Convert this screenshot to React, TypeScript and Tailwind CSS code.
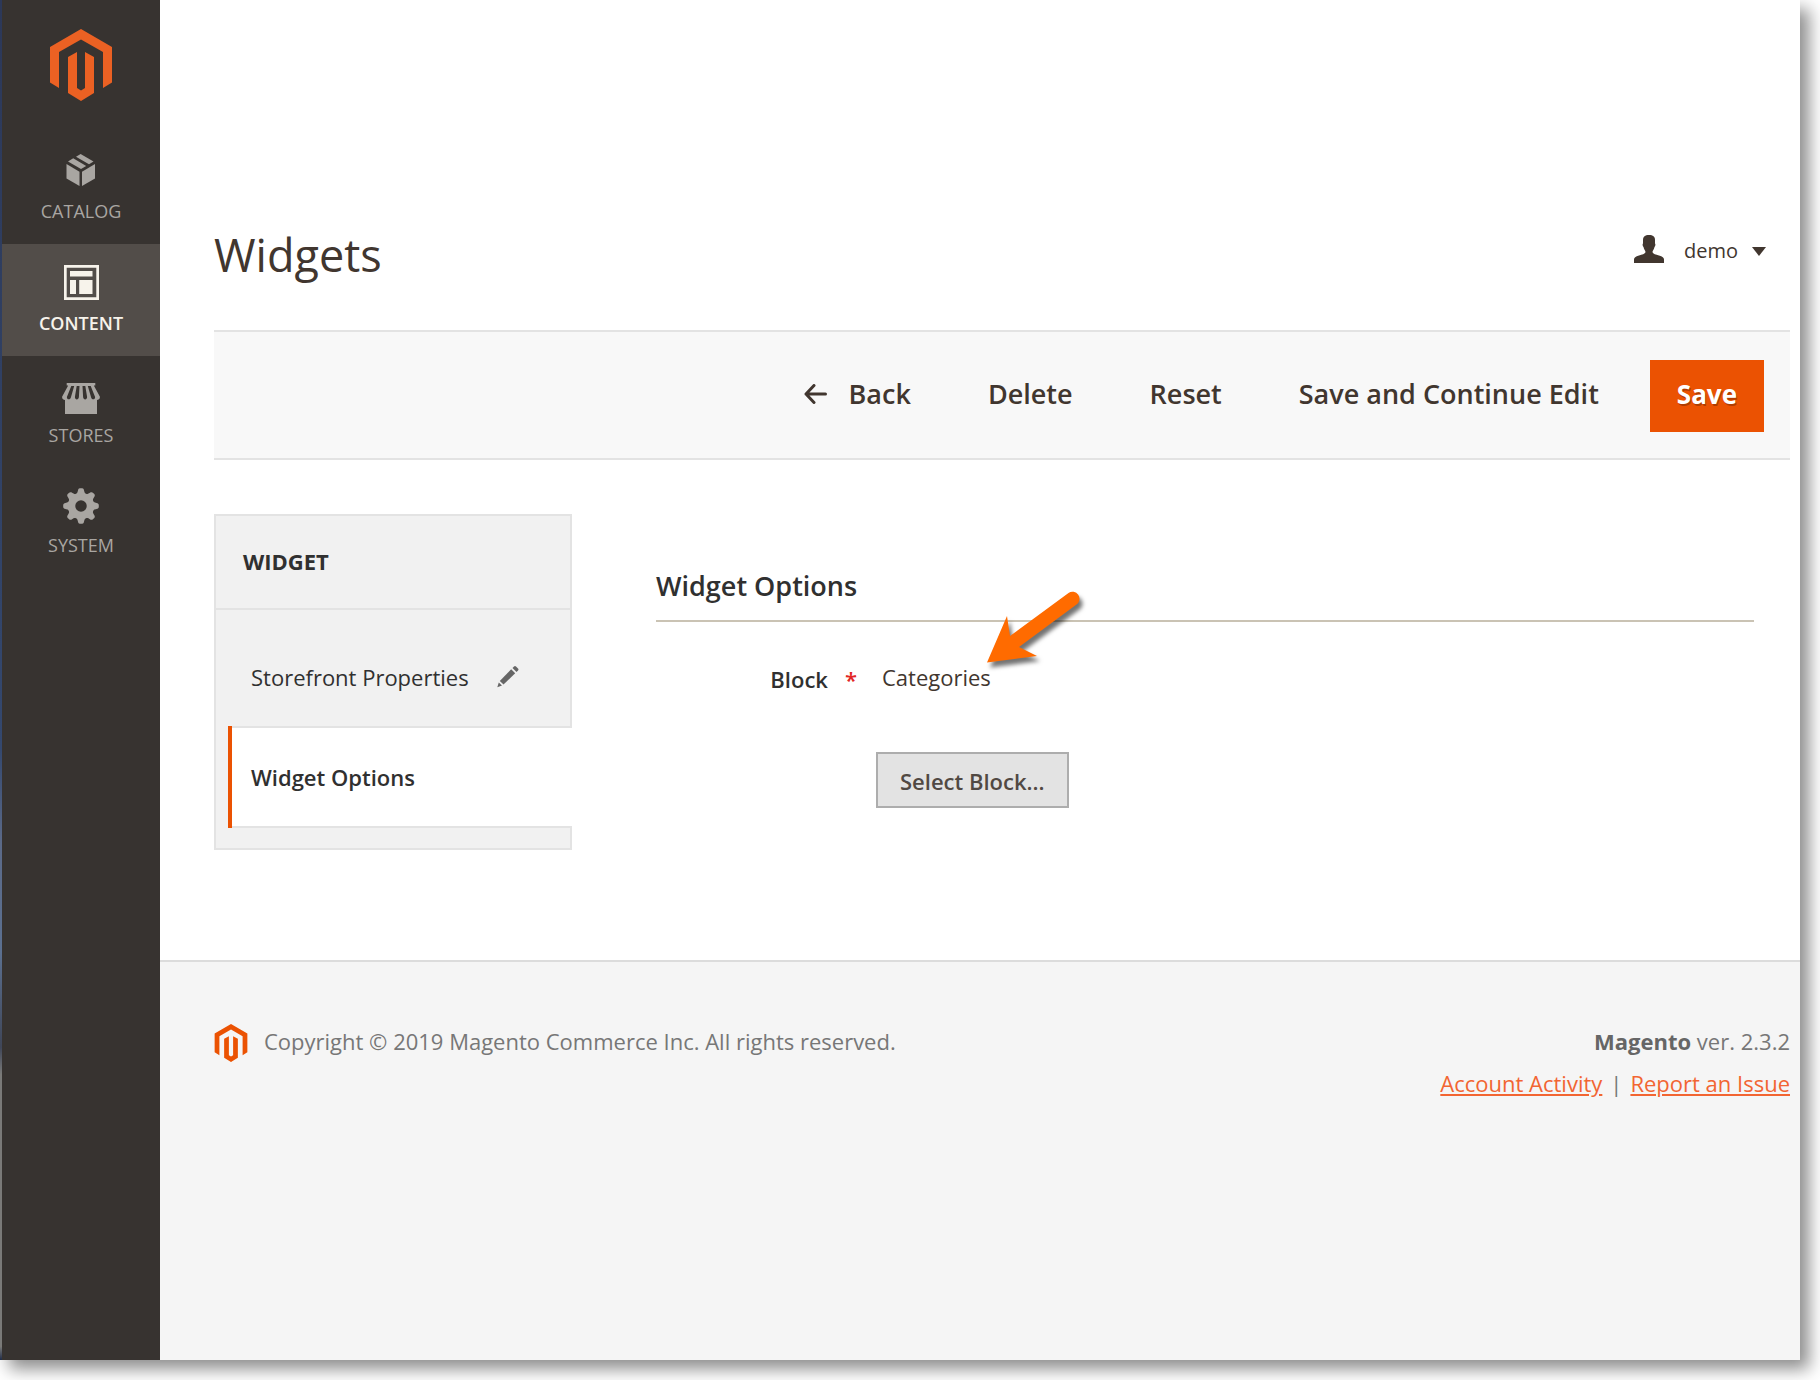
import type { ReactNode } from 'react';

function MagentoLogo({ className }: { className: string }) {
  return (
    <svg viewBox="0 0 62 72" className={className} fill="currentColor" aria-hidden="true">
      <path d="M31 0L62 18V53.500L53 59V23L31 10.500L9 23V59L0 53.500V18Z" />
      <path d="M18 28L27 23V59L31 61.500L35 59V23L44 28V64L31 72L18 64Z" />
    </svg>
  );
}

function CatalogIcon() {
  return (
    <svg width="30" height="32" viewBox="0 0 30 32" fill="currentColor" aria-hidden="true">
      <path d="M0.500 10L13.500 17.700V32L0.500 24.500Z" />
      <path d="M16 17.700L29 10V24.500L16 32Z" />
      <path d="M14.600 0L27.500 7.500L23 10.200L10 2.700Z" />
      <path d="M7.200 4.300L20.200 12L15 15L2 7.400Z" />
    </svg>
  );
}

function ContentIcon() {
  return (
    <svg width="35" height="35" viewBox="0 0 35 35" fill="currentColor" aria-hidden="true">
      <path fillRule="evenodd" d="M0 0H35V35H0ZM2.700 2.700V32.300H32.300V2.700Z" />
      <path d="M6 6H28.500V11.500H6ZM6 15H12V29H6ZM15.200 15H28.500V29H15.200Z" />
    </svg>
  );
}

function StoresIcon() {
  return (
    <svg width="38" height="40" viewBox="0 -9 38 40" fill="currentColor" aria-hidden="true">
      <path d="M4.700 0H33.300V2.500H31.800L37.800 13.500C38.300 15.500 36.500 17 35 17V31H3V17C1.500 17 -0.300 15.500 0.200 13.500L6.200 2.500H4.700Z" />
      <path
        className="fill-[#373330]"
        d="M9.300 3H12.200L9 14C8.500 17.200 4.700 17 4.900 14ZM14.700 3H17.500L16.900 14C16.700 17.300 12.900 17.300 12.900 14ZM20.500 3H23.300L25.100 14C25.100 17.300 21.300 17.300 21.100 14ZM25.800 3H28.700L33.100 14C33.300 17 29.500 17.200 29 14Z"
      />
    </svg>
  );
}

const toothAngles = [0, 45, 90, 135, 180, 225, 270, 315];

function SystemIcon() {
  return (
    <svg width="36" height="40" viewBox="-18 -22 36 40" fill="currentColor" aria-hidden="true">
      <circle r="9.500" fill="none" stroke="currentColor" strokeWidth="7.500" />
      {toothAngles.map((angle) => (
        <path
          key={angle}
          transform={`rotate(${angle})`}
          d="M-5.500 -11.500C-3.500 -12.500 -3.500 -14 -2.800 -16.500Q-2.300 -17.800 -1 -17.800H1Q2.300 -17.800 2.800 -16.500C3.500 -14 3.500 -12.500 5.500 -11.500Z"
        />
      ))}
    </svg>
  );
}

function UserIcon() {
  return (
    <svg width="30" height="28" viewBox="0 0 30 28" fill="currentColor" className="mb-1" aria-hidden="true">
      <path d="M15 0C19 0 21 1.800 21 5V8.500C21.800 9 21.300 11.500 20.500 12C20 14.500 18.500 15.500 18.500 17C19 19 22 19.500 25 20.500C28.500 21.500 30 22.500 30 24.500V28H0V24.500C0 22.500 1.500 21.500 5 20.500C8 19.500 11 19 11.500 17C11.500 15.500 10 14.500 9.500 12C8.700 11.500 8.200 9 9 8.500V5C9 1.800 11 0 15 0Z" />
    </svg>
  );
}

function PencilIcon() {
  return (
    <svg width="22" height="22" viewBox="0 0 22 22" fill="currentColor" aria-hidden="true">
      <path d="M17 0.500Q18 -0.500 19 0.500L21 2.500Q22 3.500 21 4.500L19.500 6L15.500 2Z" />
      <path d="M14.200 3.300L18.200 7.300L6.500 18.500L2.800 15Z" />
      <path d="M1.800 16.500L5 19.500L0.300 21.300Z" />
    </svg>
  );
}

// Callout arrow that points at the selected block name
function PointerArrow() {
  return (
    <svg
      width="110"
      height="90"
      viewBox="0 0 110 90"
      className="absolute left-full -top-[77px] -ml-[14px] pointer-events-none overflow-visible drop-shadow-[3px_5px_2px_rgba(0,0,0,0.55)]"
      aria-hidden="true"
    >
      <path
        className="fill-[#ff6b00]"
        d="M10 77.500L30 31L33 51L91.500 8A7 7 0 0 1 99.500 19.500L42 62L60 71Z"
      />
    </svg>
  );
}

function NavItem({ icon, label, active = false }: { icon: ReactNode; label: string; active?: boolean }) {
  const stateClass = active ? 'h-28 bg-[#524d49] font-semibold text-[#f7f3eb]' : 'h-[110px] text-[#a9a6a2]';

  return (
    <li className="first:pb-0.5">
      <a href="#" className={`flex flex-col items-center pt-5 text-[18px] leading-6 ${stateClass}`}>
        <span className="flex h-9 items-center">{icon}</span>
        <span className="mt-[11px]">{label}</span>
      </a>
    </li>
  );
}

function ToolbarButton({ children }: { children: ReactNode }) {
  return (
    <button type="button" className="flex h-[72px] items-center gap-[22px] px-[26px] pb-1 font-semibold">
      {children}
    </button>
  );
}

export default function App() {
  return (
    <div className="flex min-h-screen bg-white pr-5 pb-5 font-['Open_Sans','Noto_Sans',sans-serif] text-[22px] text-[#303030]">
      <div className="flex flex-1 shadow-[9px_9px_16px_rgba(0,0,0,0.45)]">
        <div className="w-0.5 shrink-0 bg-[linear-gradient(#2c3858_0%,#34486e_55%,#5b6a88_62%,#5b7090_70%,#3f4658_77%,#7a7a78_79%,#7a7a78_99%,#202c48_100%)]" />
        <nav className="w-[158px] shrink-0 bg-[#373330]">
          <a href="#" aria-label="Magento Admin" className="flex justify-center pt-[29px] text-[#eb6123]">
            <MagentoLogo className="h-[72px] w-[62px]" />
          </a>
          <ul className="mt-[31px]">
            <NavItem icon={<CatalogIcon />} label="CATALOG" />
            <NavItem icon={<ContentIcon />} label="CONTENT" active />
            <NavItem icon={<StoresIcon />} label="STORES" />
            <NavItem icon={<SystemIcon />} label="SYSTEM" />
          </ul>
        </nav>

        <div className="flex flex-1 flex-col bg-white">
          <header className="flex items-start justify-between pt-56 pr-[34px] pb-11 pl-[54px] text-[#41362f]">
            <h1 className="text-[45px] leading-[62px]">Widgets</h1>
            <button type="button" className="flex h-[54px] items-center text-[20px]">
              <UserIcon />
              <span className="ml-5">demo</span>
              <svg width="14" height="9" viewBox="0 0 14 9" className="ml-3.5" fill="currentColor" aria-hidden="true">
                <path d="M0 0H14L7 9Z" />
              </svg>
            </button>
          </header>

          <div className="mr-2.5 ml-[54px] flex justify-end gap-[25px] border-y-2 border-[#e3e3e3] bg-[#f8f8f8] pt-7 pr-[26px] pb-[26px] text-[27px] text-[#41362f]">
            <ToolbarButton>
              <svg width="23" height="20" viewBox="0 0 23 20" fill="none" stroke="currentColor" strokeWidth="3" strokeLinecap="round" strokeLinejoin="round" aria-hidden="true">
                <path d="M10 1.500L2 10L10 18.500M2 10H21.500" />
              </svg>
              Back
            </ToolbarButton>
            <ToolbarButton>Delete</ToolbarButton>
            <ToolbarButton>Reset</ToolbarButton>
            <ToolbarButton>Save and Continue Edit</ToolbarButton>
            <button
              type="button"
              className="h-[72px] bg-[#eb5202] px-[27px] pb-1 text-[26px] font-bold text-white [text-shadow:1px_2px_0_rgba(0,0,0,0.25)]"
            >
              Save
            </button>
          </div>

          <main className="flex items-start pt-[54px] pr-[46px] pb-[110px] pl-[54px]">
            <aside className="w-[358px] shrink-0 border-2 border-[#e3e3e3] bg-[#f1f1f1]">
              <h2 className="flex h-[94px] items-center border-b-2 border-[#e3e3e3] pb-0.5 pl-[27px] font-bold">WIDGET</h2>
              <ul className="pt-[18px] pb-5 pl-3">
                <li>
                  <a href="#" className="flex h-[98px] items-center pl-[23px]">
                    Storefront Properties
                    <span className="ml-7 text-[#666]">
                      <PencilIcon />
                    </span>
                  </a>
                </li>
                <li className="-mr-0.5 border-l-4 border-[#eb5202]">
                  <a href="#" className="flex h-[102px] items-center border-y-2 border-[#e3e3e3] bg-white pl-[19px] font-semibold">
                    Widget Options
                  </a>
                </li>
              </ul>
            </aside>

            <section className="mt-[52px] ml-[84px] flex-1">
              <h2 className="border-b-2 border-[#cac3b4] pb-3.5 text-[27px] leading-10 font-semibold">Widget Options</h2>
              <div className="mt-10 flex">
                <div className="flex w-[201px] justify-end gap-[17px] leading-[34px]">
                  <span id="block-label" className="font-semibold">Block</span>
                  <span className="font-semibold text-[#e22626]">*</span>
                </div>
                <div className="ml-[19px]">
                  <div className="flex pl-1.5 leading-[30px] text-[#41362f]">
                    <span className="relative">
                      Categories
                      <PointerArrow />
                    </span>
                  </div>
                  <button
                    type="button"
                    aria-describedby="block-label"
                    className="mt-[60px] h-14 border-2 border-[#adadad] bg-[#e3e3e3] px-[22px] pt-0.5 font-semibold text-[#514943]"
                  >
                    Select Block...
                  </button>
                </div>
              </div>
            </section>
          </main>

          <footer className="flex flex-1 items-start justify-between border-t-2 border-[#dcdcdc] bg-[#f5f5f5] pt-[58px] pr-2.5 pl-[54px] leading-[42px] text-[#777]">
            <p className="flex items-center gap-4">
              <MagentoLogo className="mt-1 h-[38px] w-[34px] text-[#eb5202]" />
              Copyright © 2019 Magento Commerce Inc. All rights reserved.
            </p>
            <div className="text-right">
              <p>
                <strong className="text-[#666]">Magento</strong> ver. 2.3.2
              </p>
              <p>
                <a href="#" className="text-[#f26532] underline">Account Activity</a>
                <span className="mx-2">|</span>
                <a href="#" className="text-[#f26532] underline">Report an Issue</a>
              </p>
            </div>
          </footer>
        </div>
      </div>
    </div>
  );
}
